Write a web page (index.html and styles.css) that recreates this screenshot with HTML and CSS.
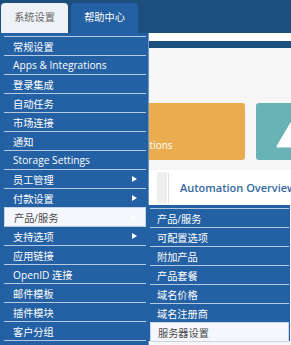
FILE: index.html
```html
<!DOCTYPE html>
<html lang="zh-CN">
<head>
    <meta charset="UTF-8">
    <meta name="viewport" content="width=device-width, initial-scale=1.0">
    <title>系统设置</title>
    <link rel="stylesheet" href="styles.css">
</head>
<body>
    <header class="topbar">
        <a class="top-tab active" href="#">系统设置</a>
        <a class="top-tab" href="#">帮助中心</a>
    </header>
    <div class="subbar"></div>
    <div class="navline"></div>

    <main class="page">
        <div class="cards">
            <div class="card card-orange">
                <span class="card-label">Pending Cancellations</span>
            </div>
            <div class="card card-teal">
                <svg class="card-icon" width="30" height="26" viewBox="0 0 30 26">
                    <path d="M15 1.5 L28.5 24.5 L1.5 24.5 Z" fill="#fff" stroke="#fff" stroke-width="2" stroke-linejoin="round"/>
                </svg>
            </div>
        </div>

        <div class="widget-tabs">
            <span class="widget-gap"></span>
            <div class="widget-tab">Automation Overview</div>
        </div>
    </main>

    <!-- Settings dropdown -->
    <ul class="dropdown">
        <li><a href="#">常规设置</a></li>
        <li><a href="#">Apps &amp; Integrations</a></li>
        <li><a href="#">登录集成</a></li>
        <li><a href="#">自动任务</a></li>
        <li><a href="#">市场连接</a></li>
        <li><a href="#">通知</a></li>
        <li><a href="#">Storage Settings</a></li>
        <li><a href="#">员工管理 <i class="arrow"></i></a></li>
        <li><a href="#">付款设置 <i class="arrow"></i></a></li>
        <li class="hover"><a href="#">产品/服务 <i class="arrow"></i></a></li>
        <li><a href="#">支持选项 <i class="arrow"></i></a></li>
        <li><a href="#">应用链接</a></li>
        <li><a href="#">OpenID 连接</a></li>
        <li><a href="#">邮件模板</a></li>
        <li><a href="#">插件模块</a></li>
        <li><a href="#">客户分组</a></li>
        <li><a href="#">安全问题设置</a></li>
    </ul>

    <ul class="dropdown submenu">
        <li><a href="#">产品/服务</a></li>
        <li><a href="#">可配置选项</a></li>
        <li><a href="#">附加产品</a></li>
        <li><a href="#">产品套餐</a></li>
        <li><a href="#">域名价格</a></li>
        <li><a href="#">域名注册商</a></li>
        <li class="hover"><a href="#">服务器设置</a></li>
    </ul>
</body>
</html>
```

FILE: styles.css
```css
body {
    font-family: "Open Sans", "Noto Sans CJK SC", sans-serif;
    background-color: #f6f6f6;
    margin: 0;
    padding: 0;
    overflow: hidden;
}

/* Top navigation */
.topbar {
    background-color: #1c4e7e;
    height: 30px;
    padding: 3px 0 0 1px;
    display: flex;
    gap: 3px;
}

.top-tab {
    width: 67px;
    height: 30px;
    line-height: 29px;
    text-align: center;
    font-size: 10.2px;
    color: #fff;
    text-decoration: none;
    background-color: #2461a4;
    border-radius: 4px 4px 0 0;
}

.top-tab.active {
    background-color: #eef2f7;
    color: #666;
}

.subbar {
    height: 8px;
    background-color: #fff;
}

.navline {
    height: 7px;
    background-color: #1c4e7e;
}

/* Page behind the menu */
.page {
    padding: 55px 0 0 20px;
}

.cards {
    display: flex;
    gap: 11px;
}

.card {
    height: 57px;
    border-radius: 3px;
    flex-shrink: 0;
}

.card-orange {
    width: 225px;
    background-color: #e9ad50;
    display: flex;
    align-items: flex-end;
    padding-left: 50px;
    box-sizing: border-box;
}

.card-label {
    color: #fff;
    font-size: 10px;
    padding-bottom: 8px;
}

.card-teal {
    width: 200px;
    background-color: #68b3b5;
}

.card-icon {
    display: block;
    margin: 19px 0 0 20px;
}

.widget-tabs {
    margin-top: 10px;
    height: 35px;
    background-color: #fff;
    display: flex;
    padding-left: 137px;
}

.widget-gap {
    flex-shrink: 0;
    width: 10px;
    margin: 2px 0;
    background-color: #eeeeee;
}

.widget-tab {
    flex-shrink: 0;
    margin: 3px 0 2px 1px;
    padding-left: 11px;
    border-left: 1px solid #e2e2e2;
    line-height: 30px;
    font-size: 11px;
    font-weight: 600;
    color: #3468a0;
    white-space: nowrap;
}

/* Dropdown menu */
.dropdown {
    position: absolute;
    top: 33px;
    left: 0;
    width: 142px;
    margin: 0;
    padding: 3px 2px 0 4px;
    list-style: none;
    background-color: #2461a4;
    border-right: 1px solid #6f95c2;
}

.dropdown li {
    border-top: 1px solid #b4c8e0;
}

.dropdown a {
    display: flex;
    justify-content: space-between;
    align-items: center;
    height: 18px;
    padding: 0 9px;
    font-size: 10.2px;
    color: #fff;
    text-decoration: none;
    white-space: nowrap;
}

.dropdown li.hover {
    background-color: #f4f7fb;
    border: 1px solid #c9d6e6;
    margin: 0 0 -1px;
}

.dropdown li.hover a {
    color: #4a4a4a;
    height: 18px;
}

.arrow {
    width: 0;
    height: 0;
    border-left: 5px solid #fff;
    border-top: 3.5px solid transparent;
    border-bottom: 3.5px solid transparent;
}

.submenu {
    top: 205px;
    left: 148px;
    width: 139px;
    padding: 3px 1px 0 2px;
    border-right: 0;
}

.submenu a {
    padding: 0 7px;
}
```
